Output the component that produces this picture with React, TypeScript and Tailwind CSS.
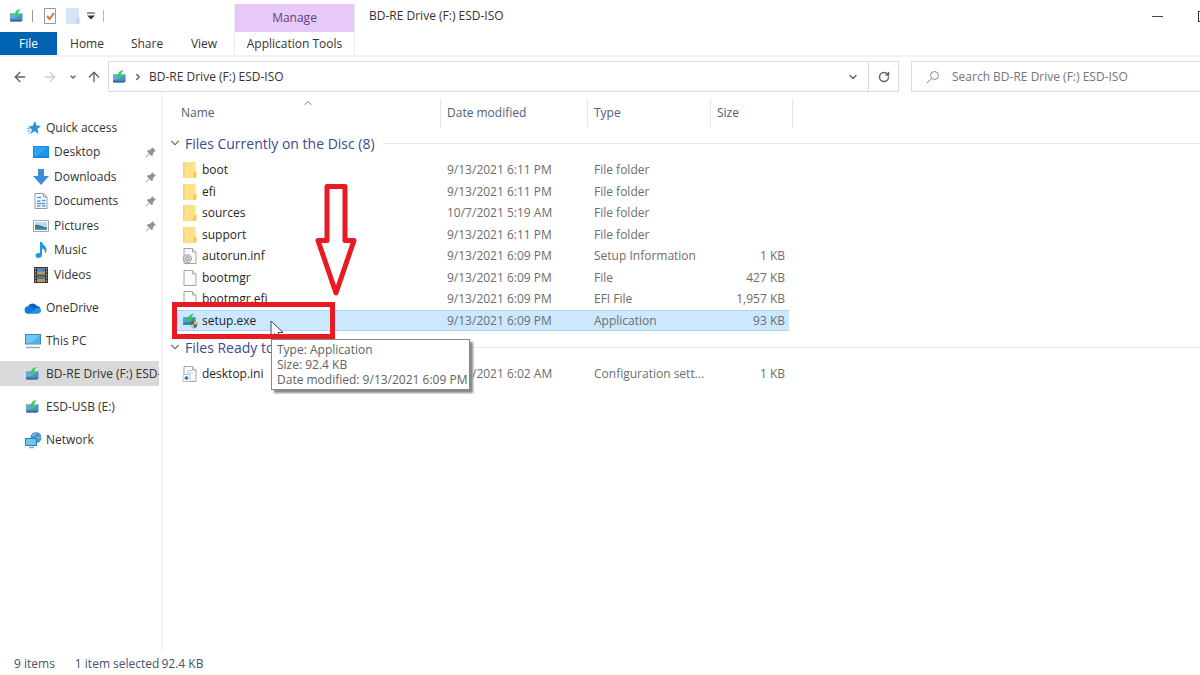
import type { ReactNode } from 'react'
import { ArrowLeft, ArrowRight, ArrowUp, ChevronDown, ChevronRight, ChevronUp, RotateCw } from 'lucide-react'

interface FileEntry {
  name: string
  icon: ReactNode
  modified: string
  type: string
  size?: string
  selected?: boolean
}

interface NavEntry {
  label: string
  icon: ReactNode
  pinned?: boolean
  active?: boolean
}

const DriveIcon = () => (
  <svg viewBox="0 0 16 16" className="w-4 h-4 shrink-0">
    <path d="M2 5.500h12.500v6.500L13 13.500H2.500L2 12z" fill="#4a8fc9" />
    <path d="M2 5.500h12.500L8 10l-6 1z" fill="#6aa9de" />
    <path d="M2 11.800h12.500v.5L13 13.500H2.500z" fill="#3a6897" />
    <path d="M4.500 6 8.200 10l3.800-3.500h-2c.2-2.300 1-4 2.800-5.200C9.500 1.200 7.200 3 6.800 6z" fill="#35cf63" />
  </svg>
)

const SetupIcon = () => (
  <svg viewBox="0 0 16 16" className="w-4 h-4 shrink-0">
    <path d="M1 4h12.500v8H1z" fill="#3f7fb8" />
    <path d="M1 4h12.500L8 8l-7 2z" fill="#5c9fd6" />
    <path d="M3.500 5.500 7.500 9.500l4-4h-2C9.700 3.500 10.500 2 12.300.8 9 .8 6.500 2.500 6 5.500z" fill="#2fc45c" />
    <path d="M12 8l3.300 1.200v2.300c0 2-1.300 3.300-3.300 4-2-.7-3.300-2-3.300-4V9.200z" fill="#44607e" />
    <path d="M12 8l3.300 1.200v2.300H12zM8.700 11.500H12v4c-2-.7-3.300-2-3.300-4z" fill="#d9c178" />
  </svg>
)

const FolderIcon = () => (
  <svg viewBox="0 0 16 18" className="w-4 h-[18px] shrink-0">
    <path d="M1 1h12.500v16H1z" fill="#ffe18a" />
    <path d="M1 1h1.500v16H1z" fill="#f8d26c" />
    <path d="M11.500 11.500 14.500 10.500V16l-1.500 1h-1.500z" fill="#f3c95c" />
  </svg>
)

const PageIcon = ({ children }: { children?: ReactNode }) => (
  <svg viewBox="0 0 16 18" className="w-4 h-[18px] shrink-0">
    <path d="M2 1.500h8.500L14 5v11.500H2z" fill="#fbfbfb" stroke="#a3a3a3" />
    <path d="M10.500 1.500V5H14" fill="#eee" stroke="#a3a3a3" />
    {children}
  </svg>
)

const InfIcon = () => (
  <PageIcon>
    <circle cx="5.500" cy="11.500" r="4" fill="#d5d5d5" stroke="#858585" strokeDasharray="2 1" />
    <circle cx="5.500" cy="11.500" r="1.500" fill="#fff" stroke="#858585" />
  </PageIcon>
)

const IniIcon = () => (
  <PageIcon>
    <path d="M5 5.500h5M5 8h6" stroke="#c4c4c4" />
    <path d="M1 9.500h7v7H1z" fill="#fff" stroke="#b7c4d2" />
    <path d="M4.500 11v4M2.500 13h4" stroke="#3167b5" strokeWidth="1.500" fill="none" />
  </PageIcon>
)

const StarIcon = () => (
  <svg viewBox="0 0 16 16" className="ml-[3px] w-4 h-4 shrink-0">
    <path d="M8 1 9.500 5.500 14 6 10.500 9 11.500 14 7.500 11.300 3.500 14 5 9.500 1 6.500 5.500 6z" fill="#2b93dd" />
    <path d="M0 11.500 3.500 10M1.500 14 4 11.500M0 8.500 3 8.300" stroke="#63b4ec" />
  </svg>
)

const DesktopIcon = () => (
  <svg viewBox="0 0 18 16" className="w-[18px] h-4 shrink-0">
    <path d="M1 2h16v12H1z" fill="#1689dd" />
    <path d="M2 3h14v9H2z" fill="#2ba4f4" />
    <path d="M16 3v9H5z" fill="#1c94e6" />
  </svg>
)

const DownloadIcon = () => (
  <svg viewBox="0 0 18 16" className="w-[18px] h-4 shrink-0">
    <path d="M6 0h6v7h5l-8 9-8-9h5z" fill="#3d8ed8" />
  </svg>
)

const DocumentIcon = () => (
  <svg viewBox="0 0 18 18" className="w-[18px] h-[18px] shrink-0">
    <path d="M3 1.500h8.500L15 5v11.500H3z" fill="#fff" stroke="#8f9ba5" />
    <path d="M11.500 1.500V5H15" fill="none" stroke="#8f9ba5" />
    <path d="M5 5.500h4M5 9h3.500M10 8.500h3.500M5 11.500h8.500M5 14h3.500M10 14h3.500" stroke="#4d9bd5" strokeWidth="1.500" />
  </svg>
)

const PictureIcon = () => (
  <svg viewBox="0 0 18 16" className="w-[18px] h-4 shrink-0">
    <path d="M1.500 2.500h15v11h-15z" fill="#fff" stroke="#a5a5a5" />
    <path d="M3 4h12v8H3z" fill="#b9dcf3" />
    <path d="M3 7c3-1 5 1 12 2.500V12H3z" fill="#3d7a86" />
    <path d="M3 10.500h12V12H3z" fill="#4b95c9" />
  </svg>
)

const MusicIcon = () => (
  <svg viewBox="0 0 18 18" className="w-[18px] h-[18px] shrink-0">
    <path d="M8 1h2c.5 3 4.500 4 4.500 7.500 0 1.500-.7 3-1.500 4 .3-3-1-4.500-3-5V14c0 2-1.700 3-3.500 3S3.500 16 3.500 14.500 5 12 6.500 12c.6 0 1.100.1 1.500.3z" fill="#1e97e4" />
  </svg>
)

const VideoIcon = () => (
  <svg viewBox="0 0 18 18" className="w-[18px] h-[18px] shrink-0">
    <path d="M2 1h14v16H2z" fill="#3a3a3a" />
    <path d="M5 2h8v6.500H5z" fill="#567fb5" />
    <path d="M5 9.500h8V16H5z" fill="#5a6e91" />
    <path d="M5 6.500c3-2 5 0 8-1v3H5zM5 13.500c3-1 5 0 8-1V16H5z" fill="#b59a58" />
    <path d="M3.500 2v15M14.500 2v15" stroke="#a8a8a8" strokeDasharray="1.500 1.500" />
  </svg>
)

const OneDriveIcon = () => (
  <svg viewBox="0 0 18 16" className="w-[18px] h-4 shrink-0">
    <path d="M4.500 13.500a3.500 3.500 0 0 1-.5-7 5 5 0 0 1 9-.5 3.800 3.800 0 0 1 .5 7.500z" fill="#0b63b8" />
    <path d="M4.500 13.500 12 8c2-.8 5 0 5 3 0 1.500-1.300 2.500-3 2.500z" fill="#1e96e6" />
    <path d="M4.500 13.500a3.500 3.500 0 0 1-.5-7c2-.3 3 .5 7.500 3z" fill="#1478d4" />
  </svg>
)

const PcIcon = () => (
  <svg viewBox="0 0 18 16" className="w-[18px] h-4 shrink-0">
    <path d="M1 1h16v10.500H1z" fill="#3a86bf" />
    <path d="M2 2h14v8.500H2z" fill="#73c6f5" />
    <path d="M16 2v8.500H6z" fill="#4fb1ec" />
    <path d="M2 14.500h14" stroke="#9aa7b1" strokeWidth="1.500" />
  </svg>
)

const NetworkIcon = () => (
  <svg viewBox="0 0 18 18" className="w-[18px] h-[18px] shrink-0">
    <circle cx="12" cy="6.500" r="5.500" fill="#4a96cc" />
    <path d="M8 4c2 1 3 0 4-2.500M10 8c3-2 5 0 7-2" stroke="#9ed3f3" fill="none" />
    <path d="M1 7h12v8H1z" fill="#2d7fc0" />
    <path d="M2 8h10v6H2z" fill="#6bc3f6" />
    <path d="M5 16.500h5" stroke="#8aa4b8" strokeWidth="1.500" />
  </svg>
)

const PinIcon = () => (
  <svg viewBox="0 0 12 12" className="w-3 h-3 shrink-0">
    <path d="M7 1l4 4-1.300.3L8 7.200 7.800 9.500 6.500 10 4.500 8 1 11.500.5 11 4 7.500 2 5.500l.5-1.300 2.300-.2L6.700 2.300z" fill="#8a949d" />
  </svg>
)

const FolderFaintIcon = () => (
  <svg viewBox="0 0 16 18" className="w-4 h-[18px]">
    <path d="M1 1h13v16H1z" fill="#d6e4f7" />
    <path d="M11.500 11 14.500 10v6l-1 1h-2z" fill="#c2d5ee" />
  </svg>
)

const navGroups: NavEntry[][] = [
  [
    { label: 'Quick access', icon: <StarIcon /> },
    { label: 'Desktop', icon: <DesktopIcon />, pinned: true },
    { label: 'Downloads', icon: <DownloadIcon />, pinned: true },
    { label: 'Documents', icon: <DocumentIcon />, pinned: true },
    { label: 'Pictures', icon: <PictureIcon />, pinned: true },
    { label: 'Music', icon: <MusicIcon /> },
    { label: 'Videos', icon: <VideoIcon /> },
  ],
  [{ label: 'OneDrive', icon: <OneDriveIcon /> }],
  [{ label: 'This PC', icon: <PcIcon /> }],
  [{ label: 'BD-RE Drive (F:) ESD-ISO', icon: <DriveIcon />, active: true }],
  [{ label: 'ESD-USB (E:)', icon: <DriveIcon /> }],
  [{ label: 'Network', icon: <NetworkIcon /> }],
]

const discFiles: FileEntry[] = [
  { name: 'boot', icon: <FolderIcon />, modified: '9/13/2021 6:11 PM', type: 'File folder' },
  { name: 'efi', icon: <FolderIcon />, modified: '9/13/2021 6:11 PM', type: 'File folder' },
  { name: 'sources', icon: <FolderIcon />, modified: '10/7/2021 5:19 AM', type: 'File folder' },
  { name: 'support', icon: <FolderIcon />, modified: '9/13/2021 6:11 PM', type: 'File folder' },
  { name: 'autorun.inf', icon: <InfIcon />, modified: '9/13/2021 6:09 PM', type: 'Setup Information', size: '1 KB' },
  { name: 'bootmgr', icon: <PageIcon />, modified: '9/13/2021 6:09 PM', type: 'File', size: '427 KB' },
  { name: 'bootmgr.efi', icon: <PageIcon />, modified: '9/13/2021 6:09 PM', type: 'EFI File', size: '1,957 KB' },
  { name: 'setup.exe', icon: <SetupIcon />, modified: '9/13/2021 6:09 PM', type: 'Application', size: '93 KB', selected: true },
]

const pendingFiles: FileEntry[] = [
  { name: 'desktop.ini', icon: <IniIcon />, modified: '10/7/2021 6:02 AM', type: 'Configuration sett...', size: '1 KB' },
]

const TitleBar = () => (
  <header className="flex h-[57px] overflow-hidden border-b-2 border-[#f1f1f1]">
    <div className="w-[234px] shrink-0">
      <div className="flex h-8 items-center pl-2">
        <DriveIcon />
        <span className="ml-2 h-3 w-px bg-[#9a9a9a]" />
        <button aria-label="Properties" className="ml-[10px]">
          <svg viewBox="0 0 14 16" className="w-[14px] h-4">
            <path d="M1.500.5h11v15h-11z" fill="#fff" stroke="#999" />
            <path d="m4 8 2.500 3L11 5" fill="none" stroke="#e2703f" strokeWidth="2" />
          </svg>
        </button>
        <button aria-label="New folder" className="ml-2">
          <FolderFaintIcon />
        </button>
        <button aria-label="Customize" className="ml-[6px]">
          <svg viewBox="0 0 8 8" className="w-2 h-2">
            <path d="M0 .5h8v1H0zM0 3.500h8L4 7.500z" fill="#333" />
          </svg>
        </button>
        <span className="ml-2 h-3 w-px bg-[#b5b5b5]" />
      </div>
      <nav className="flex h-[23px]">
        <button className="w-[57px] bg-[#0063b1] text-white">File</button>
        <button className="w-[60px]">Home</button>
        <button className="w-[60px]">Share</button>
        <button className="w-[54px]">View</button>
      </nav>
    </div>
    <div className="mt-1 flex w-[121px] shrink-0 flex-col border-x border-[#ececec] text-center">
      <div className="h-7 bg-[#e7c9f9] leading-[28px] text-[#5b4668]">Manage</div>
      <button className="h-[23px] whitespace-nowrap">Application Tools</button>
    </div>
    <h1 className="ml-[14px] h-8 flex-1 leading-[32px]">BD-RE Drive (F:) ESD-ISO</h1>
    <div className="-mr-[26px] flex h-8 shrink-0">
      <button aria-label="Minimize" className="flex w-[46px] items-center justify-center">
        <span className="h-px w-[11px] bg-[#444]" />
      </button>
      <button aria-label="Maximize" className="flex w-[46px] items-center justify-center">
        <span className="h-[11px] w-[11px] border border-[#333]" />
      </button>
    </div>
  </header>
)

const AddressBar = () => (
  <div className="mt-1 flex h-[31px] items-center">
    <div className="flex w-[108px] shrink-0 items-center pl-3 text-[#606060]">
      <button aria-label="Back"><ArrowLeft className="w-4 h-4" /></button>
      <button aria-label="Forward" className="ml-[14px] text-[#cfcfcf]"><ArrowRight className="w-4 h-4" /></button>
      <button aria-label="Recent locations" className="ml-[11px]"><ChevronDown className="w-2 h-2" strokeWidth={4} /></button>
      <button aria-label="Up" className="ml-[9px]"><ArrowUp className="w-4 h-4" /></button>
    </div>
    <div className="flex h-full flex-1 items-center border border-[#dcdcdc] pl-[2px]">
      <DriveIcon />
      <ChevronRight className="mx-[6px] w-[10px] h-[10px] text-[#555]" strokeWidth={3} />
      <span className="flex-1">BD-RE Drive (F:) ESD-ISO</span>
      <button aria-label="Previous locations" className="mr-[9px]">
        <ChevronDown className="w-3 h-3 text-[#666]" strokeWidth={3} />
      </button>
      <button aria-label="Refresh" className="flex h-full w-[30px] items-center justify-center border-l border-[#dcdcdc]">
        <RotateCw className="w-3 h-3 text-[#666]" strokeWidth={3} />
      </button>
    </div>
    <label className="ml-3 flex h-full w-[289px] items-center border border-r-0 border-[#dcdcdc] pl-[14px]">
      <svg viewBox="0 0 14 14" className="w-[14px] h-[14px] shrink-0" fill="none" stroke="#8a8a8a">
        <circle cx="8.500" cy="5.500" r="4" />
        <path d="M5.500 8.500 1 13" />
      </svg>
      <input
        type="text"
        aria-label="Search"
        placeholder="Search BD-RE Drive (F:) ESD-ISO"
        className="ml-3 min-w-0 flex-1 bg-transparent outline-none placeholder:text-[#757575]"
      />
    </label>
  </div>
)

const Sidebar = () => (
  <nav className="flex w-[163px] shrink-0 flex-col gap-2 border-r-2 border-[#f5f5f5] pt-[23px] pr-[2px]">
    {navGroups.map((group, i) => (
      <ul key={i}>
        {group.map((item, j) => (
          <li key={item.label} className="h-6 odd:h-[25px]">
            <a
              href="#"
              className={`flex h-full items-center overflow-hidden whitespace-nowrap ${
                item.active ? 'bg-[#d9d9d9]' : ''
              } ${i === 0 && j > 0 ? 'pl-8' : 'pl-6'}`}
            >
              <span className="flex w-[22px] shrink-0">{item.icon}</span>
              <span className="flex-1">{item.label}</span>
              {item.pinned && <span className="mr-[2px]"><PinIcon /></span>}
            </a>
          </li>
        ))}
      </ul>
    ))}
  </nav>
)

const GroupRow = ({ title }: { title: string }) => (
  <tr className="h-8">
    <th colSpan={5} scope="colgroup" className="p-0 font-normal">
      <button className="flex w-full items-center text-[14px] text-[#3b4a92]">
        <ChevronDown className="-ml-[5px] mr-[3px] w-[14px] h-[14px] text-[#777]" />
        <span className="whitespace-nowrap">{title}</span>
        <span className="ml-2 h-px flex-1 bg-[#e8e8e8]" />
      </button>
    </th>
  </tr>
)

const FileRow = ({ file }: { file: FileEntry }) => {
  const cell = file.selected ? 'p-0 bg-[#cce8ff] border-y border-[#a9d4f5]' : 'p-0'
  return (
    <tr className="h-[22px] text-[#6d6d6d] even:h-[21px]">
      <td className={cell}>
        <div className="flex items-center gap-1 pl-[9px] text-[#1f1f1f]">
          {file.icon}
          <span>{file.name}</span>
        </div>
      </td>
      <td className={`${cell} pl-[7px]!`}>{file.modified}</td>
      <td className={`${cell} pl-[7px]! whitespace-nowrap`}>{file.type}</td>
      <td className={`${cell} pr-1! text-right`}>{file.size}</td>
      <td />
    </tr>
  )
}

const FileTable = () => (
  <table className="w-full table-fixed border-separate border-spacing-0 text-left">
    <colgroup>
      <col className="w-[267px]" />
      <col className="w-[147px]" />
      <col className="w-[123px]" />
      <col className="w-[79px]" />
      <col />
    </colgroup>
    <thead>
      <tr className="h-[28px] text-[#4c607a]">
        <th className="relative p-0 pl-2 font-normal">
          Name
          <ChevronUp className="absolute left-[129px] -top-[2px] w-3 h-3 text-[#777]" />
        </th>
        <th className="border-l border-[#e5e5e5] p-0 pl-[6px] font-normal">Date modified</th>
        <th className="border-l border-[#e5e5e5] p-0 pl-[6px] font-normal">Type</th>
        <th className="border-l border-[#e5e5e5] p-0 pl-[6px] font-normal">Size</th>
        <td className="p-0 pl-[3px]"><div className="h-7 border-l border-[#e5e5e5]" /></td>
      </tr>
    </thead>
    <tbody>
      <GroupRow title="Files Currently on the Disc (8)" />
    </tbody>
    <tbody>
      {discFiles.map((file) => <FileRow key={file.name} file={file} />)}
    </tbody>
    <tbody>
      <GroupRow title="Files Ready to Be Written to the Disc (1)" />
    </tbody>
    <tbody>
      {pendingFiles.map((file) => <FileRow key={file.name} file={file} />)}
    </tbody>
  </table>
)

/* Pointer, hover tooltip and the red callouts that float over the list */
const Overlays = () => (
  <>
    <svg viewBox="0 0 14 20" className="absolute left-[107px] top-[228px] w-[14px] h-5">
      <path d="M1 1v16l4-3.500L8 19l2.500-1-2.500-5.500h5z" fill="#fff" stroke="#444" />
    </svg>
    <div className="absolute left-[9px] top-[210px] h-[37px] w-[163px] border-5 border-[#e81b25]" />
    <svg viewBox="0 0 42 116" className="absolute left-[152px] top-[91px] w-[42px] h-[116px]">
      <path d="M12 3.500h18v54h9L21 110 3 57.500h9z" fill="#fff" stroke="#e81b25" strokeWidth="5" strokeLinejoin="round" />
    </svg>
    <div
      role="tooltip"
      className="absolute left-[108px] top-[247px] border border-[#888] bg-white py-[2px] pr-[2px] pl-[5px] leading-[15px] whitespace-nowrap text-[#626262] shadow-[3px_3px_2px_#888]"
    >
      <p>Type: Application</p>
      <p>Size: 92.4 KB</p>
      <p>Date modified: 9/13/2021 6:09 PM</p>
    </div>
  </>
)

export default function App() {
  return (
    <div className="flex min-h-screen flex-col overflow-hidden bg-white font-['Open_Sans',sans-serif] text-[12px] text-[#333]">
      <TitleBar />
      <AddressBar />
      <div className="flex flex-1">
        <Sidebar />
        <main className="relative min-w-0 flex-1 pt-[7px] pl-[10px]">
          <FileTable />
          <Overlays />
        </main>
      </div>
      <footer className="flex h-[23px] items-center pl-[14px] text-[#43536b]">
        <span>9 items</span>
        <span className="ml-[20px]">1 item selected</span>
        <span className="ml-[2px]">92.4 KB</span>
      </footer>
    </div>
  )
}
